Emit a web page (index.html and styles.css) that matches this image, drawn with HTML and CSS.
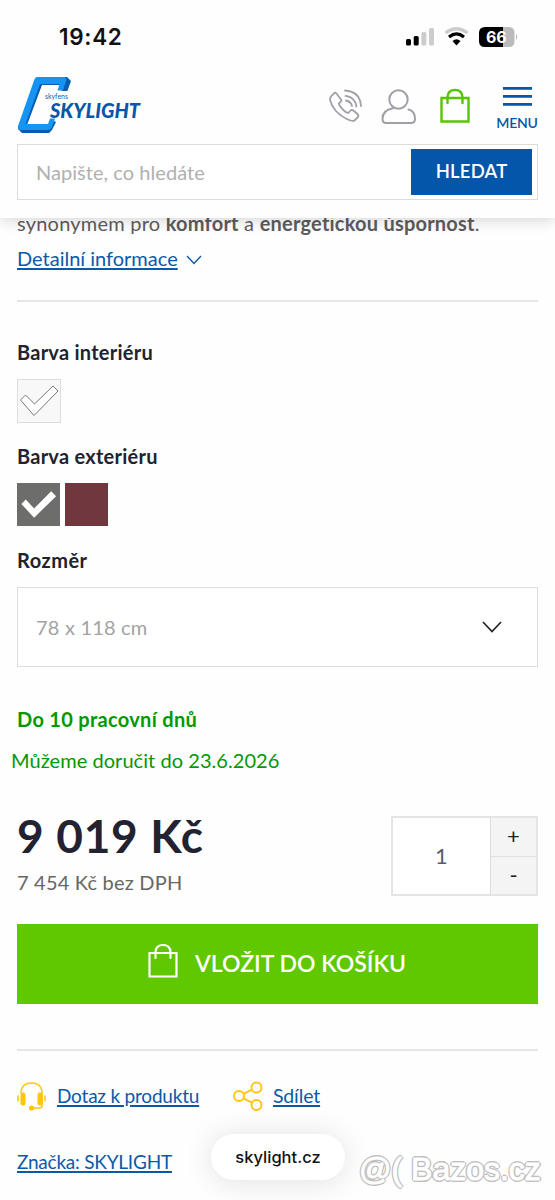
FILE: index.html
```html
<!DOCTYPE html>
<html lang="cs">
<head>
<meta charset="utf-8">
<title>SKYLIGHT</title>
<link rel="stylesheet" href="styles.css">
</head>
<body>
<header class="header">
  <div class="status">
    <span class="time">19:42</span>
    <svg class="status-icons" width="112" height="24" viewBox="0 0 112 24">
      <rect x="0" y="14" width="5" height="6.500" rx="1.500" fill="#000"/>
      <rect x="7.700" y="11" width="5" height="9.500" rx="1.500" fill="#000"/>
      <rect x="15.400" y="7" width="5" height="13.500" rx="1.500" fill="#ccc"/>
      <rect x="23" y="3" width="5" height="17.500" rx="1.500" fill="#ccc"/>
      <path d="M39.500 8Q50.500-.5 61.500 8" fill="none" stroke="#ccc" stroke-width="3.200"/>
      <path d="M43 12Q50.500 5.900 58 12" fill="none" stroke="#000" stroke-width="3.200"/>
      <path d="M46.500 16L50.500 20.500L54.500 16Q50.500 12.500 46.500 16Z" fill="#000"/>
      <path d="M79 2H97V22H79Q73 22 73 16V8Q73 2 79 2Z" fill="#000"/>
      <path d="M97 2H103Q108.500 2 108.500 8V16Q108.500 22 103 22H97Z" fill="#bbb"/>
      <path d="M110 9Q112 12 110 15Z" fill="#aaa"/>
      <text x="90.300" y="18" class="battery-text">66</text>
    </svg>
  </div>
  <div class="nav">
    <svg class="logo" width="130" height="60" viewBox="0 0 130 60">
      <path d="M19 1.500L50 1L54 5L49.500 17.500L44 16L47 9L25 9L10 49L32 48.500L33.500 43.500L39 46L35 54L32 57H5L1 53Z" fill="#075cae"/>
      <path d="M21 1H46Q50.500 1 49 5L46 14.500H40.500L42.500 8H23L8.500 48H31L33 42.500H38L35 51Q34 54 30 54H4Q0 54 1 50L17 4.500Q18 1 21 1Z" fill="#1594f3"/>
      <path d="M26 15H52V24H26ZM32 24H60V42H32Z" fill="#fefefe"/>
      <text x="28" y="22.500" class="logo-small" textLength="23" lengthAdjust="spacingAndGlyphs">skyfens</text>
      <text x="33" y="41.500" class="logo-big" textLength="90" lengthAdjust="spacingAndGlyphs">SKYLIGHT</text>
    </svg>
    <svg class="phone" width="34" height="34" viewBox="0 0 34 34" fill="none" stroke="#a0a0aa" stroke-width="1.800" stroke-linecap="round" stroke-linejoin="round">
      <path d="M7.300 4.300L12 10.500Q12.800 12 11.500 13L9.800 14.500Q10.500 17.500 16 22.500Q18 24 19.600 23.800L21.500 21.500Q22.700 20.500 24.300 21.500L28.500 25Q30 26.500 29 28L26 31Q24.500 32.500 21.500 31.500Q13.500 29 6.500 21.500Q2.500 16.500 1.200 11.500Q.7 8.500 2.500 6.800L5 4.300Q6.300 3.200 7.300 4.300Z"/>
      <path d="M16 1.500Q31 2.500 32 17M16.500 6.800Q26 7.800 27.500 17.500M17 11.500Q22 12.500 23 17"/>
    </svg>
    <svg class="user" width="36" height="36" viewBox="0 0 36 36" fill="none" stroke="#a0a0aa" stroke-width="2" stroke-linecap="round">
      <circle cx="17.500" cy="10.500" r="9.200"/>
      <path d="M12 19.300Q1.500 21 1.500 30Q1.500 34 5 34H30Q34 34 34 30Q34 22 27.500 20.500"/>
    </svg>
    <svg class="bag" width="32" height="36" viewBox="0 0 32 36" fill="none" stroke="#59c400" stroke-width="2.400" stroke-linecap="round">
      <path d="M2.500 10H29.500V33.500H2.500ZM8.500 15V9Q9 2 16 2Q23 2 23.500 9V15"/>
    </svg>
    <div class="menu">
      <svg width="29" height="20" viewBox="0 0 29 20" fill="#0456aa"><path d="M0 0H29V2.700H0ZM0 8H29V10.700H0ZM0 16H29V18.700H0Z"/></svg>
      <span class="menu-label">MENU</span>
    </div>
  </div>
  <div class="search">
    <span class="placeholder">Napište, co hledáte</span>
    <span class="search-button">HLEDAT</span>
  </div>
</header>
<main class="main">
  <p class="intro">synonymem pro <b>komfort</b> a <b>energetickou úspornost</b>.</p>
  <div class="detail"><a class="link detail-link">Detailní informace</a>
    <svg width="16" height="10" viewBox="0 0 16 10" fill="none" stroke="#0456aa" stroke-width="1.300"><path d="M1 1L8 8.500L15 1"/></svg>
  </div>
  <hr class="rule">
  <h2 class="label interior">Barva interiéru</h2>
  <div class="swatches">
    <div class="swatch light"><svg width="44" height="44" viewBox="0 0 44 44"><path d="M3.500 21L8.500 16L17.500 25L36 7L41 12L17 36.500Z" fill="#fff" stroke="#777" stroke-width="1"/></svg></div>
  </div>
  <h2 class="label exterior">Barva exteriéru</h2>
  <div class="swatches">
    <div class="swatch gray"><svg width="43" height="43" viewBox="0 0 44 44"><path d="M4.500 21.500L9 17L17.500 26L35 8.500L40 13.500L17.500 35.500Z" fill="#fff"/></svg></div>
    <div class="swatch red"></div>
  </div>
  <h2 class="label size">Rozměr</h2>
  <div class="select"><span class="select-value">78 x 118 cm</span>
    <svg width="20" height="12" viewBox="0 0 20 12" fill="none" stroke="#222" stroke-width="1.700"><path d="M1 1L10 10.500L19 1"/></svg>
  </div>
  <p class="stock">Do 10 pracovní dnů</p>
  <p class="delivery">Můžeme doručit do 23.6.2026</p>
  <div class="buy">
    <div>
      <div class="price">9 019 Kč</div>
      <div class="novat">7 454 Kč bez DPH</div>
    </div>
    <div class="quantity">
      <span class="amount">1</span>
      <div class="steps"><span class="step">+</span><span class="step minus">-</span></div>
    </div>
  </div>
  <div class="cart">
    <svg width="32" height="36" viewBox="0 0 32 36" fill="none" stroke="#fff" stroke-width="2.200" stroke-linecap="round"><path d="M2.500 10H29.500V33.500H2.500ZM8.500 15V9Q9 2 16 2Q23 2 23.500 9V15"/></svg>
    <span class="cart-label">VLOŽIT DO KOŠÍKU</span>
  </div>
  <hr class="rule bottom-rule">
  <div class="actions">
    <svg class="headset" width="29" height="29" viewBox="0 0 29 29" fill="none" stroke="#fdc50b" stroke-width="1.500" stroke-linecap="round">
      <path d="M4 11V9Q5.500 1 14.500 1Q23.500 1 25 9V24Q25 26 22.500 26H15M1 14V19M28 14V19"/>
      <rect x="3.500" y="10.500" width="5" height="13" rx="2.200" fill="#fdc50b" stroke="none"/><rect x="20.500" y="10.500" width="5" height="13" rx="2.200" fill="#fdc50b" stroke="none"/><circle cx="14.500" cy="26" r="2.600" fill="#fdc50b" stroke="none"/>
    </svg>
    <a class="link ask">Dotaz k produktu</a>
    <svg class="share" width="30" height="30" viewBox="0 0 30 30" fill="none" stroke="#fdc50b" stroke-width="1.900"><circle cx="6" cy="15" r="5"/><circle cx="23.500" cy="6.500" r="5"/><circle cx="23.500" cy="24" r="5"/><path d="M10.500 12.800L19 8.600M10.500 17.300L19 21.700"/></svg>
    <a class="link share-link">Sdílet</a>
  </div>
  <a class="link brand">Značka: SKYLIGHT</a>
</main>
<div class="pill">skylight.cz</div>
<div class="watermark">@( Bazos.cz</div>
</body>
</html>
```
FILE: styles.css
```css
* { box-sizing: border-box; }
body { margin: 0; width: 555px; height: 1200px; overflow: hidden; position: relative; background: #fefefe; color: #5c5c5c; font-family: Lato, "Open Sans", sans-serif; font-size: 20px; }
p, h2 { margin: 0; }
svg { display: block; flex: none; }
span, a, p, h2, .price, .novat { white-space: nowrap; }
.header { position: relative; z-index: 1; height: 218px; background: #fefefe; box-shadow: 0 2px 14px rgba(0,0,0,.17); }
.status { display: flex; align-items: center; justify-content: space-between; height: 74px; padding: 0 37px 0 59px; }
.time { margin-top: -1px; font: 600 22.500px Inter, sans-serif; color: #111; letter-spacing: 0.700px; }
.battery-text { font: 700 16px Inter, sans-serif; fill: #fff; text-anchor: middle; }
.nav { display: flex; height: 70px; padding-left: 17px; }
.logo { margin-top: 2px; overflow: visible; }
.logo-small { font: 7px Lato, sans-serif; fill: #0b61b1; }
.logo-big { font: italic 900 21px Lato, sans-serif; fill: #0756a8; }
.phone { margin: 15px 0 0 182px; }
.user { margin: 15px 0 0 18px; }
.bag { margin: 14px 0 0 22px; }
.menu { display: flex; flex-direction: column; align-items: center; width: 44px; margin: 13px 0 0 24px; }
.menu-label { margin-top: 6px; font-size: 14px; line-height: 20px; color: #0456aa; letter-spacing: -0.200px; font-weight: 600; }
.search { display: flex; align-items: center; justify-content: space-between; height: 56px; margin: 0 17px; padding: 0 5px 0 18px; border: 1px solid #dcdcde; background: #fff; }
.placeholder { color: #b0b0b0; letter-spacing: 0.050px; }
.search-button { width: 121px; height: 46px; background: #0456aa; color: #fff; font-weight: 600; font-size: 18.500px; letter-spacing: 0.200px; line-height: 45px; text-align: center; }
.main { padding: 0 17px; margin-top: -9px; }
.intro { height: 28px; line-height: 28px; letter-spacing: 0.220px; }
.link { color: #0b59a9; text-decoration: underline; text-decoration-thickness: 1.500px; text-underline-offset: 2px; }
.detail { display: flex; align-items: center; gap: 8px; height: 42px; }
.detail svg { margin-top: 3px; }
.rule { margin: 21px 0 0; border: 0; height: 2px; background: #e6e6e6; }
.label { color: #222230; font-size: 20px; line-height: 26px; font-weight: 700; letter-spacing: 0.250px; }
.interior { margin-top: 37px; }
.exterior { margin-top: 20px; }
.size { margin-top: 20px; letter-spacing: 0.500px; }
.swatches { display: flex; gap: 5px; height: 44px; margin-top: 14px; }
.swatch { width: 43px; height: 43px; }
.light { width: 44px; height: 44px; border: 1px solid #ddd; background: #f8f8f8; }
.light svg { margin: -1px; }
.gray { background: #6d6d6c; }
.red { background: #70383e; }
.select { display: flex; align-items: center; justify-content: space-between; height: 80px; margin-top: 14px; padding: 0 35px 0 18px; border: 1px solid #dcdcde; background: #fff; }
.select-value { color: #a3a3a3; letter-spacing: 0.200px; }
.stock { margin-top: 39px; color: #009900; line-height: 26px; font-weight: 700; letter-spacing: 0.300px; }
.delivery { margin: 15px 0 0 -6px; color: #009900; line-height: 26px; letter-spacing: 0.050px; }
.buy { display: flex; justify-content: space-between; height: 108px; margin-top: 43px; }
.price { height: 40px; line-height: 40px; color: #222230; font-size: 46px; font-weight: 700; letter-spacing: 0.700px; }
.novat { margin-top: 13px; line-height: 26px; color: #666; letter-spacing: 0.200px; }
.quantity { display: flex; width: 147px; height: 80px; border: 2px solid #e4e4e6; background: #fff; }
.amount { width: 97px; line-height: 76px; text-align: center; font-size: 22px; color: #5c5c68; }
.steps { flex: 1; border-left: 1px solid #dcdcde; background: #f4f4f4; }
.step { display: block; height: 38px; line-height: 36px; text-align: center; font-size: 22px; color: #222; }
.minus { border-top: 1px solid #e0e0e0; }
.cart { display: flex; align-items: center; justify-content: center; gap: 16px; height: 80px; padding-right: 2px; background: #5fc800; color: #fff; font-size: 23px; font-weight: 600; }
.cart svg { margin-top: -6px; }
.cart-label { margin-top: -2px; }
.bottom-rule { margin-top: 45px; }
.actions { display: flex; align-items: center; height: 30px; margin-top: 30px; }
.ask { width: 142px; margin: -2px 0 0 11px; font-size: 19px; letter-spacing: -0.200px; }
.share { margin-left: 34px; }
.share-link { margin: -2px 0 0 10px; font-size: 19.500px; letter-spacing: -0.200px; }
.brand { display: block; margin-top: 38px; line-height: 26px; font-size: 19px; letter-spacing: -0.220px; }
.pill { position: absolute; left: 211px; top: 1134px; width: 134px; height: 46px; border-radius: 23px; background: #fff; box-shadow: 0 2px 30px rgba(0,0,0,.12); color: #111; font: 500 16.500px/46px Inter, sans-serif; text-align: center; }
.watermark { position: absolute; left: 359px; top: 1151px; color: #fff; font: 32px/37px "Liberation Sans", sans-serif; -webkit-text-stroke: 1px #fff; text-shadow: 1.800px 0 #c0c0c0, -1.800px 0 #c0c0c0, 0 1.800px #c0c0c0, 0 -1.800px #c0c0c0, 1.300px 1.300px #c0c0c0, -1.300px 1.300px #c0c0c0, 1.300px -1.300px #c0c0c0, -1.300px -1.300px #c0c0c0; white-space: nowrap; }
```
